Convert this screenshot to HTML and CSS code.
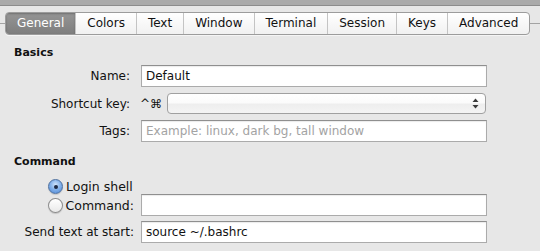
FILE: index.html
```html
<!DOCTYPE html>
<html>
<head>
<meta charset="utf-8">
<link rel="stylesheet" href="styles.css">
</head>
<body>
<div class="window">
  <div class="topstrip"></div>
  <div class="tabstrip">
    <div class="tabs">
      <div class="tab selected">General</div>
      <div class="tab">Colors</div>
      <div class="tab">Text</div>
      <div class="tab">Window</div>
      <div class="tab">Terminal</div>
      <div class="tab">Session</div>
      <div class="tab">Keys</div>
      <div class="tab">Advanced</div>
    </div>
  </div>

  <h2 class="heading basics-heading">Basics</h2>
  <div class="basics">
    <label class="lbl">Name:</label>
    <div class="field"><span class="value">Default</span></div>

    <label class="lbl">Shortcut key:</label>
    <div class="shortcut">
      <span class="mods">^⌘</span>
      <div class="popup">
        <svg class="updown" width="7" height="11" viewBox="0 0 7 11"><path d="M3.5 0.5 L6.5 4 L0.5 4 Z" fill="#3a3a3a"/><path d="M3.5 10.5 L6.5 7 L0.5 7 Z" fill="#3a3a3a"/></svg>
      </div>
    </div>

    <label class="lbl">Tags:</label>
    <div class="field"><span class="placeholder">Example: linux, dark bg, tall window</span></div>
  </div>

  <h2 class="heading command-heading">Command</h2>
  <div class="command">
    <div class="radio-item login">
      <span class="radio on"></span><span>Login shell</span>
    </div>
    <div class="radio-item">
      <span class="radio"></span><span>Command:</span>
    </div>
    <div class="field"></div>
    <label class="lbl send">Send text at start:</label>
    <div class="field send"><span class="value">source ~/.bashrc</span></div>
  </div>
</div>
</body>
</html>
```
FILE: styles.css
```css
* { box-sizing: border-box; }
html, body {
  margin: 0;
  padding: 0;
  background: #e7e7e7;
}
body {
  width: 540px;
  height: 251px;
  overflow: hidden;
  font-family: "DejaVu Sans", "Lucida Grande", sans-serif;
  font-size: 12px;
  color: #111;
}
.topstrip {
  height: 6px;
  background: #aaaaaa;
  border-bottom: 1px solid #8c8c8c;
}
.tabstrip {
  margin-top: 6px;
  padding-left: 5px;
  background: linear-gradient(to bottom, transparent 11px, #a3a3a3 11px, #a3a3a3 12px, transparent 12px);
}
.tabs {
  display: inline-flex;
  height: 23px;
  border: 1px solid #9c9c9c;
  border-radius: 4px;
  overflow: hidden;
  background: linear-gradient(to bottom, #ffffff, #f1f1f1);
  box-shadow: 0 1px 0 rgba(255,255,255,0.6);
}
.tab {
  padding: 0 11px;
  line-height: 21px;
  border-left: 1px solid #c4c4c4;
  color: #111;
  white-space: nowrap;
}
.tab:first-child { border-left: none; }
.tab.selected {
  background: linear-gradient(to bottom, #959595, #7e7e7e);
  color: #fff;
  box-shadow: inset 0 1px 2px rgba(0,0,0,0.25);
}
.heading {
  margin: 0;
  font-size: 11px;
  font-weight: bold;
  padding-left: 14px;
  line-height: 14px;
}
.basics-heading { margin-top: 11px; }
.basics {
  display: grid;
  grid-template-columns: 130px 346px;
  column-gap: 11px;
  row-gap: 6px;
  margin-top: 5px;
  align-items: center;
}
.lbl {
  justify-self: end;
  white-space: nowrap;
}
.field {
  height: 22px;
  background: #fff;
  border: 1px solid #ababab;
  border-top-color: #8f8f8f;
  box-shadow: inset 0 1px 1px rgba(0,0,0,0.08);
  padding: 0 4px;
  line-height: 20px;
  white-space: nowrap;
  overflow: hidden;
}
.placeholder { color: #a3a3a3; }
.shortcut {
  display: flex;
  align-items: center;
  gap: 4px;
  margin-left: -1px;
}
.mods {
  width: 23px;
  white-space: nowrap;
}
.popup {
  flex: 1;
  height: 21px;
  border: 1px solid #a0a0a0;
  border-radius: 4px;
  background: linear-gradient(to bottom, #ffffff 0%, #fbfbfb 45%, #eeeeee 55%, #f4f4f4 100%);
  display: flex;
  align-items: center;
  justify-content: flex-end;
  padding-right: 6px;
  margin-right: 1px;
}
.command-heading { margin-top: 13px; }
.command {
  display: grid;
  grid-template-columns: 134px 346px;
  column-gap: 7px;
  margin-top: 10px;
  align-items: center;
}
.radio-item {
  display: flex;
  align-items: center;
  gap: 3px;
  padding-left: 48px;
  white-space: nowrap;
  font-size: 12.5px;
}
.radio-item.login {
  grid-column: 1 / span 2;
  height: 15px;
}
.radio {
  width: 15px;
  height: 15px;
  border-radius: 50%;
  border: 1px solid #8e8e8e;
  background: linear-gradient(to bottom, #ffffff, #e9e9e9);
  box-shadow: 0 1px 1px rgba(0,0,0,0.15);
  display: inline-block;
  position: relative;
}
.radio.on {
  border-color: #4d6f9e;
  background: radial-gradient(circle at 50% 35%, #cfe3fa 0%, #86b3ea 45%, #4b86d6 100%);
}
.radio.on::after {
  content: "";
  position: absolute;
  left: 4.5px;
  top: 4.5px;
  width: 4px;
  height: 4px;
  border-radius: 50%;
  background: #1d2a44;
}
.command .send { margin-top: 5px; }
```
